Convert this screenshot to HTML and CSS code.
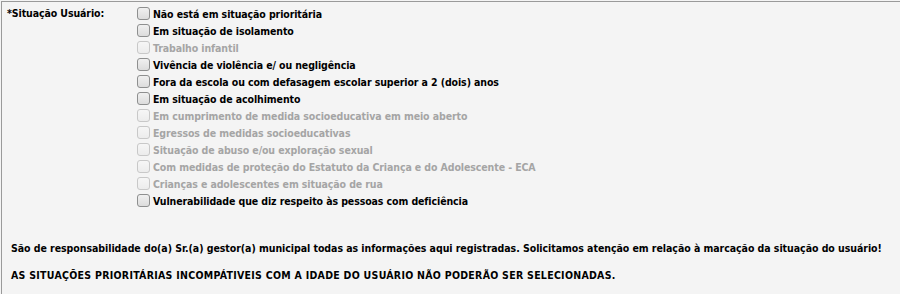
FILE: index.html
```html
<!DOCTYPE html>
<html lang="pt-BR">
<head>
<meta charset="utf-8">
<link rel="stylesheet" href="styles.css">
</head>
<body>
<div class="panel">
  <div class="field">
    <div class="label">*Situação Usuário:</div>
    <div class="options">
      <div class="opt"><span class="cb"></span><span class="txt">Não está em situação prioritária</span></div>
      <div class="opt"><span class="cb"></span><span class="txt">Em situação de isolamento</span></div>
      <div class="opt dis"><span class="cb"></span><span class="txt">Trabalho infantil</span></div>
      <div class="opt"><span class="cb"></span><span class="txt">Vivência de violência e/ ou negligência</span></div>
      <div class="opt"><span class="cb"></span><span class="txt">Fora da escola ou com defasagem escolar superior a 2 (dois) anos</span></div>
      <div class="opt"><span class="cb"></span><span class="txt">Em situação de acolhimento</span></div>
      <div class="opt dis"><span class="cb"></span><span class="txt">Em cumprimento de medida socioeducativa em meio aberto</span></div>
      <div class="opt dis"><span class="cb"></span><span class="txt">Egressos de medidas socioeducativas</span></div>
      <div class="opt dis"><span class="cb"></span><span class="txt">Situação de abuso e/ou exploração sexual</span></div>
      <div class="opt dis"><span class="cb"></span><span class="txt">Com medidas de proteção do Estatuto da Criança e do Adolescente - ECA</span></div>
      <div class="opt dis"><span class="cb"></span><span class="txt">Crianças e adolescentes em situação de rua</span></div>
      <div class="opt"><span class="cb"></span><span class="txt">Vulnerabilidade que diz respeito às pessoas com deficiência</span></div>
    </div>
  </div>
  <p class="note">São de responsabilidade do(a) Sr.(a) gestor(a) municipal todas as informações aqui registradas. Solicitamos atenção em relação à marcação da situação do usuário!</p>
  <p class="note caps">AS SITUAÇÕES PRIORITÁRIAS INCOMPÁTIVEIS COM A IDADE DO USUÁRIO NÃO PODERÃO SER SELECIONADAS.</p>
</div>
</body>
</html>
```
FILE: styles.css
```css
html, body {
  margin: 0;
  padding: 0;
  background: #f4f4f4;
}
body {
  padding: 1px 0 0 1px;
  font-family: "DejaVu Sans Condensed", "DejaVu Sans", sans-serif;
  font-size: 10.5px;
  letter-spacing: -0.1px;
  font-weight: bold;
  color: #000;
}
.panel {
  border-top: 1px solid #9a9a9a;
  border-left: 1px solid #9a9a9a;
  height: 294px;
  box-sizing: border-box;
  padding: 3px 0 0 5px;
}
.field {
  display: flex;
}
.label {
  width: 130px;
  line-height: 17px;
}
.options {
  display: flex;
  flex-direction: column;
}
.opt {
  display: flex;
  align-items: center;
  height: 17px;
}
.cb {
  width: 11px;
  height: 11px;
  border: 1px solid #8e8f8f;
  border-radius: 3px;
  background: linear-gradient(#f0f0f0, #dcdcdc);
  margin-right: 3px;
  flex: none;
}
.txt {
  white-space: nowrap;
}
.dis {
  color: #a5a5a5;
}
.dis .cb {
  border-color: #c8c8c8;
  background: linear-gradient(#f6f6f6, #ececec);
}
.note {
  margin: 0;
  padding-left: 4px;
  line-height: 27px;
  white-space: nowrap;
  letter-spacing: -0.05px;
}
.caps {
  letter-spacing: 0.28px;
}
.field + .note {
  margin-top: 26px;
}
```
